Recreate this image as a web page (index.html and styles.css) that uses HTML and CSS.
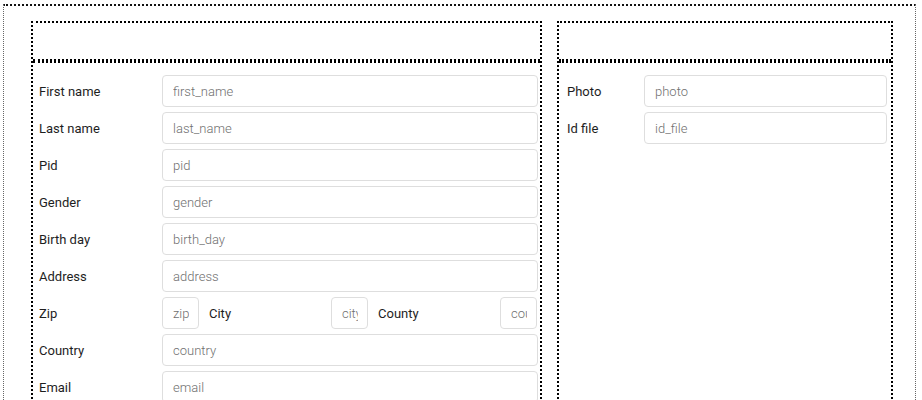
FILE: index.html
```html
<!DOCTYPE html>
<html lang="en">
<head>
<meta charset="utf-8">
<title>Form</title>
<link rel="stylesheet" href="styles.css">
</head>
<body>
<div class="page">
  <section class="card card-main">
    <div class="card-header"></div>
    <div class="card-body">
      <div class="row"><label class="lbl">First name</label><input class="field" placeholder="first_name"></div>
      <div class="row"><label class="lbl">Last name</label><input class="field" placeholder="last_name"></div>
      <div class="row"><label class="lbl">Pid</label><input class="field" placeholder="pid"></div>
      <div class="row"><label class="lbl">Gender</label><input class="field" placeholder="gender"></div>
      <div class="row"><label class="lbl">Birth day</label><input class="field" placeholder="birth_day"></div>
      <div class="row"><label class="lbl">Address</label><input class="field" placeholder="address"></div>
      <div class="row">
        <label class="lbl">Zip</label>
        <div class="inline-group">
          <input class="field small" placeholder="zip">
          <label class="sub-lbl">City</label>
          <input class="field small" placeholder="city">
          <label class="sub-lbl">County</label>
          <input class="field small" placeholder="county">
        </div>
      </div>
      <div class="row"><label class="lbl">Country</label><input class="field" placeholder="country"></div>
      <div class="row"><label class="lbl">Email</label><input class="field" placeholder="email"></div>
    </div>
  </section>
  <section class="card card-side">
    <div class="card-header"></div>
    <div class="card-body">
      <div class="row"><label class="lbl">Photo</label><input class="field" placeholder="photo"></div>
      <div class="row"><label class="lbl">Id file</label><input class="field" placeholder="id_file"></div>
    </div>
  </section>
</div>
</body>
</html>
```

FILE: styles.css
```css
html, body {
  margin: 0;
  padding: 0;
  background: #fff;
}

body {
  font-family: Roboto, "Liberation Sans", sans-serif;
  font-size: 13px;
  color: #222;
}

.page {
  margin: 4px 6px 0 3px;
  border: 1px dotted #666;
  border-top: 2px dotted #111;
  padding: 15px 22px 0 27px;
  display: flex;
  gap: 15px;
  align-items: stretch;
  min-height: 420px;
  box-sizing: border-box;
}

.card {
  border: 2px dotted #000;
  display: flex;
  flex-direction: column;
  box-sizing: border-box;
}

.card-main {
  width: 511px;
}

.card-side {
  width: 336px;
}

.card-header {
  height: 36px;
  border-bottom: 2px dotted #000;
}

.card-body {
  flex: 1;
  border-top: 2px dotted #000;
  padding-top: 12px;
  display: flex;
  flex-direction: column;
  gap: 5px;
}

.card-main .card-body {
  padding-left: 6px;
  padding-right: 2px;
}

.card-side .card-body {
  padding-left: 8px;
  padding-right: 4px;
}

.row {
  display: grid;
  align-items: center;
  height: 32px;
}

.card-main .row {
  grid-template-columns: 123px 1fr;
}

.card-side .row {
  grid-template-columns: 77px 1fr;
}

.lbl {
  color: #1e1e1e;
  white-space: nowrap;
}

.field {
  box-sizing: border-box;
  width: 100%;
  height: 32px;
  border: 1px solid #dedede;
  border-radius: 4px;
  padding: 0 9px 0 10px;
  font-family: Roboto, "Liberation Sans", sans-serif;
  font-size: 13px;
  font-weight: 300;
  color: #333;
  background: #fff;
  outline: none;
}

.field::placeholder {
  color: #6f6f6f;
}

.inline-group {
  display: grid;
  grid-template-columns: 37px 132px 37px 132px 37px;
  align-items: center;
  height: 32px;
  overflow: hidden;
}

.field.small {
  width: 37px;
}

.sub-lbl {
  padding-left: 10px;
  color: #1e1e1e;
  white-space: nowrap;
}
```
